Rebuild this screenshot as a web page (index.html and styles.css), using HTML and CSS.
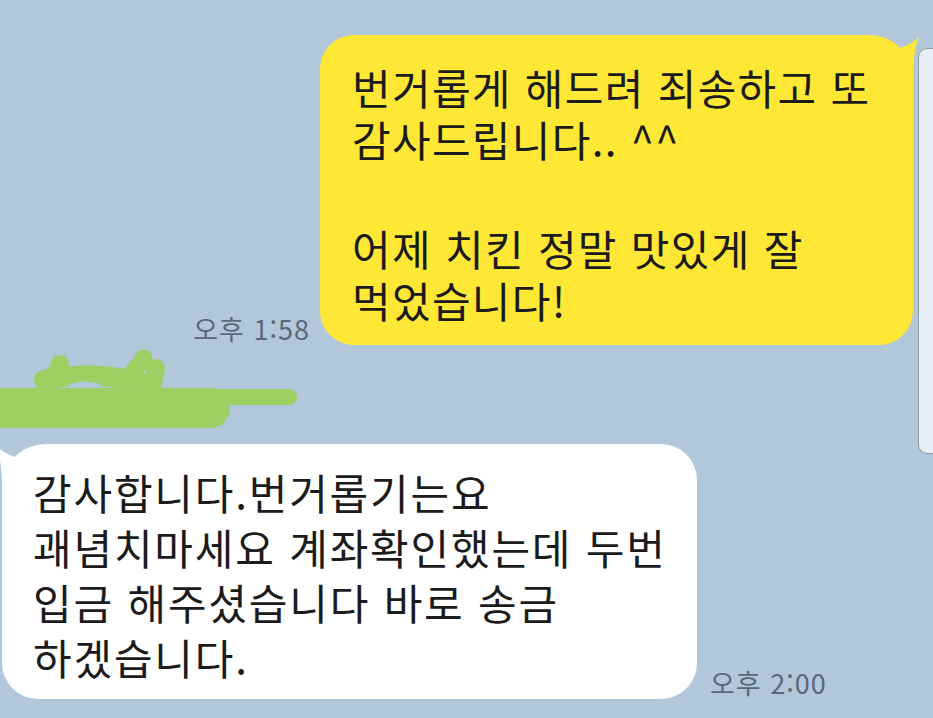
FILE: index.html
```html
<!DOCTYPE html>
<html lang="ko">
<head>
  <meta charset="UTF-8">
  <title>채팅</title>
  <link rel="stylesheet" href="styles.css">
</head>
<body>
  <div class="chat">
    <div class="row me">
      <span class="time">오후 1:58</span>
      <div class="bubble me">
        <svg class="ear" viewBox="0 0 29 44"><path d="M10,13 Q20,10 29,2 Q23,16 23,44 L10,44 Z"/></svg>
        <p>번거롭게 해드려 죄송하고 또<br>감사드립니다.. ^^</p>
        <p>어제 치킨 정말 맛있게 잘<br>먹었습니다!</p>
      </div>
    </div>

    <!-- 이름 가림 -->
    <svg class="redact" viewBox="0 0 300 82">
      <g fill="none" stroke="#9dcf63" stroke-linecap="round" stroke-linejoin="round">
        <path d="M-10,58 L210,58" stroke-width="40"/>
        <path d="M195,47 L289,47" stroke-width="16"/>
        <path d="M44,30 Q90,20 140,32" stroke-width="20"/>
        <path d="M48,40 L60,14" stroke-width="18"/>
        <path d="M144,8 L122,36" stroke-width="17"/>
        <path d="M156,18 L150,48" stroke-width="18"/>
      </g>
      <path d="M72,36 Q86,32 98,36" fill="none" stroke="#b2c7da" stroke-width="5" stroke-linecap="round"/>
    </svg>

    <div class="row them">
      <div class="bubble them">
        <svg class="ear" viewBox="0 0 29 44"><path d="M19,13 Q9,10 0,2 Q6,16 6,44 L19,44 Z"/></svg>
        <p>감사합니다.번거롭기는요<br>괘념치마세요 계좌확인했는데 두번<br>입금 해주셨습니다 바로 송금<br>하겠습니다.</p>
      </div>
      <span class="time">오후 2:00</span>
    </div>
  </div>

  <div class="scrollbar"></div>
</body>
</html>
```

FILE: styles.css
```css
html, body {
  margin: 0;
  height: 100%;
}

body {
  background: #b2c7da;
  font-family: "Noto Sans CJK KR", "Noto Sans", sans-serif;
  color: #1b1b1b;
  overflow: hidden;
  position: relative;
}

.chat {
  padding-top: 35px;
}

.row {
  display: flex;
  align-items: flex-end;
}

.row.me {
  justify-content: flex-end;
  gap: 10px;
  padding-right: 20px;
}

.row.them {
  gap: 13px;
  padding-left: 2px;
  margin-top: 12px;
}

.time {
  font-size: 27px;
  letter-spacing: 1px;
  line-height: 1;
  color: #5c6878;
  margin-bottom: 3px;
  white-space: nowrap;
}

.bubble {
  position: relative;
  box-sizing: border-box;
  font-size: 42px;
  letter-spacing: 1.3px;
  white-space: nowrap;
}

.bubble p {
  margin: 0;
}

.bubble.me {
  width: 593px;
  padding: 26px 20px 19px 32px;
  background: #ffe835;
  border-radius: 34px 44px 34px 34px;
  line-height: 52px;
}

.bubble.me p + p {
  margin-top: 57px;
}

.bubble.them {
  width: 695px;
  padding: 20px 20px 15px 31px;
  background: #fff;
  border-radius: 44px 36px 36px 36px;
  line-height: 55px;
  letter-spacing: 1.8px;
}

.ear {
  position: absolute;
  top: 0;
  width: 29px;
  height: 44px;
  overflow: visible;
}

.bubble.me .ear {
  right: -6px;
  fill: #ffe835;
}

.bubble.them .ear {
  left: -6px;
  fill: #fff;
}

.redact {
  display: block;
  width: 300px;
  height: 82px;
  margin-top: 5px;
}

.scrollbar {
  position: absolute;
  top: 48px;
  right: 0;
  width: 14px;
  height: 404px;
  background: #e8eef4;
  border: 1px solid #909ba6;
  border-right: none;
  border-radius: 9px 0 0 9px;
}
```
